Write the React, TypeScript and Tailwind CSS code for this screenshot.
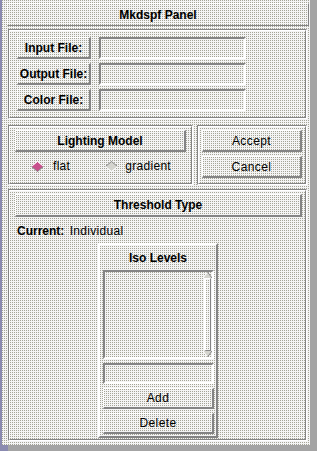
import React from "react";

const dither = "bg-[conic-gradient(at_1px_1px,#f4f4f4_75%,#a4a496_0)] bg-size-[2px_2px]";
const raised =
  "border-t border-l border-b-2 border-r-2 border-t-white border-l-white border-b-[#848484] border-r-[#848484]";
const sunken =
  "border-2 border-t-[#848484] border-l-[#848484] border-b-white border-r-white";

const Frame = ({ className, children }: { className: string; children: React.ReactNode }) => (
  <div className={`flex border border-t-[#848484] border-l-[#848484] border-b-white border-r-white ${className}`}>
    <div className="flex-1 flex flex-col border border-t-white border-l-white border-b-[#848484] border-r-[#848484]">
      {children}
    </div>
  </div>
);

const Btn = ({ label, bold, className }: { label: string; bold?: boolean; className: string }) => (
  <div
    className={`${raised} ${dither} flex items-center justify-center text-[12px] leading-none ${
      bold ? "font-bold" : "tracking-[0.4px]"
    } ${className}`}
  >
    {label}
  </div>
);

const Diamond = ({ on }: { on?: boolean }) => (
  <svg width="13" height="11" viewBox="0 0 13 11">
    <polygon points="6.5,0.5 12.5,5.5 6.5,10.5 0.5,5.5" fill={on ? "#c8508c" : "#d4d4ce"} />
    <polyline points="0.5,5.5 6.5,0.5 12.5,5.5" fill="none" stroke={on ? "#ffffff" : "#848484"} strokeWidth="1" />
    <polyline points="0.5,5.5 6.5,10.5 12.5,5.5" fill="none" stroke={on ? "#848484" : "#ffffff"} strokeWidth="1" />
  </svg>
);

export default function App() {
  return (
    <div className="w-[317px] h-[451px] flex flex-col text-black font-['Liberation_Sans',Arial,sans-serif] select-none">
      <div className="flex h-[445px]">
        <div className="w-[2px] bg-[#8a8ab0]" />
        <div className={`w-[308px] ${dither} flex flex-col`}>
          {/* title */}
          <div className="mt-[3px] ml-[5px] w-[302px] h-[23px] flex items-center justify-center border border-t-white border-l-white border-b-[#848484] border-r-[#848484] text-[12px] font-bold">
            Mkdspf Panel
          </div>

          <div className="ml-[6px] w-[299px] mt-[3px] flex flex-col">
            {/* files */}
            <Frame className="h-[90px]">
              <div className="pl-[7px] pt-[6px] flex flex-col gap-[4px]">
                {["Input File:", "Output File:", "Color File:"].map((l) => (
                  <div key={l} className="flex gap-[8px]">
                    <Btn label={l} bold className="w-[74px] h-[22px]" />
                    <div className={`${sunken} w-[147px] h-[22px]`} />
                  </div>
                ))}
              </div>
            </Frame>

            <div className="flex gap-[4px] mt-[6px]">
              {/* lighting */}
              <Frame className="w-[185px] h-[60px]">
                <div className="pl-[5px] pt-[3px]">
                  <Btn label="Lighting Model" bold className="w-[171px] h-[22px]" />
                </div>
                <div className="flex items-center mt-[8px] text-[12px] leading-none tracking-[0.3px]">
                  <div className="ml-[21px]">
                    <Diamond on />
                  </div>
                  <span className="ml-[9px]">flat</span>
                  <div className="ml-[35px]">
                    <Diamond />
                  </div>
                  <span className="ml-[7px]">gradient</span>
                </div>
              </Frame>

              {/* accept / cancel */}
              <Frame className="w-[110px] h-[60px]">
                <div className="pl-[3px] pt-[3px] flex flex-col gap-[4px]">
                  <Btn label="Accept" className="w-[100px] h-[22px]" />
                  <Btn label="Cancel" className="w-[100px] h-[22px]" />
                </div>
              </Frame>
            </div>

            {/* threshold */}
            <Frame className="h-[252px] mt-[4px]">
              <div className="pl-[5px] pt-[3px]">
                <Btn label="Threshold Type" bold className="w-[287px] h-[23px]" />
              </div>
              <div className="pl-[7px] mt-[8px] text-[12px] leading-none">
                <span className="font-bold">Current:</span> <span className="ml-[2px] tracking-[0.3px]">Individual</span>
              </div>
              <div className="ml-[88px] mt-[6px] w-[120px] h-[195px] flex flex-col border-2 border-t-white border-l-white border-b-[#848484] border-r-[#848484]">
                <div className="h-[25px] flex items-center justify-center text-[12px] font-bold">Iso Levels</div>
                <div className="ml-[3px] w-[111px] flex flex-col gap-[4px]">
                  <div className={`${sunken} h-[89px] flex`}>
                    <div className="flex-1" />
                    <div className="w-[10px] flex flex-col items-center">
                      <svg width="9" height="6" viewBox="0 0 9 6">
                        <polygon points="4.5,0 9,6 0,6" fill="#d4d4ce" />
                        <polyline points="0,6 4.5,0" stroke="#ffffff" fill="none" />
                        <polyline points="4.5,0 9,6" stroke="#848484" fill="none" />
                      </svg>
                      <div className="flex-1 w-[7px] border-l-2 border-t border-t-white border-l-white border-r border-b border-r-[#848484] border-b-[#848484]" />
                      <svg width="9" height="6" viewBox="0 0 9 6">
                        <polygon points="0,0 9,0 4.5,6" fill="#d4d4ce" />
                        <polyline points="0,0 4.5,6" stroke="#ffffff" fill="none" />
                        <polyline points="4.5,6 9,0" stroke="#848484" fill="none" />
                      </svg>
                    </div>
                  </div>
                  <div className={`${sunken} h-[21px]`} />
                  <Btn label="Add" className="h-[21px]" />
                  <Btn label="Delete" className="h-[21px]" />
                </div>
              </div>
            </Frame>
          </div>
        </div>
        <div className="w-[7px] bg-[#a4a4a4]" />
      </div>
      <div className="flex h-[6px]">
        <div className="w-[8px] bg-[#8a8ab0]" />
        <div className="flex-1 bg-[#a4a4a4]" />
      </div>
    </div>
  );
}
